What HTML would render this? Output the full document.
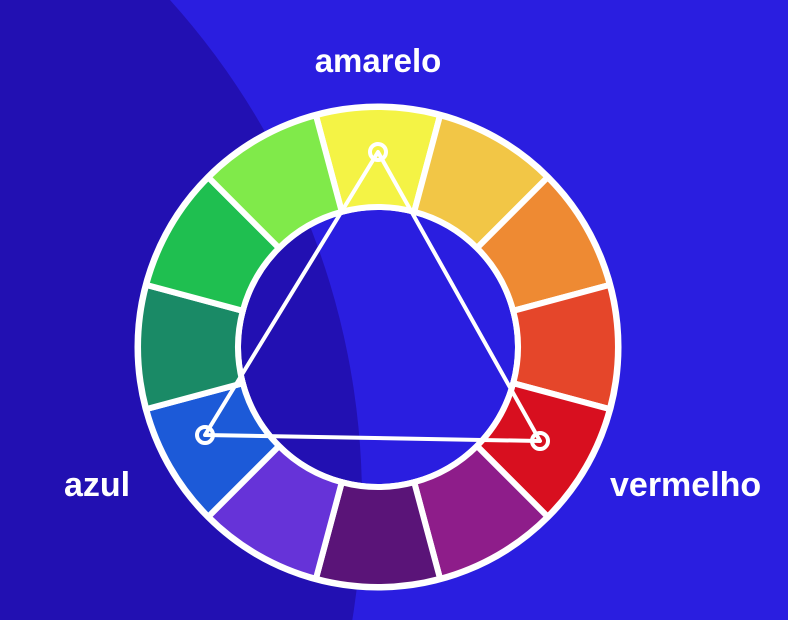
<!DOCTYPE html>
<html><head><meta charset="utf-8"><style>
html,body{margin:0;padding:0;width:788px;height:620px;overflow:hidden;background:#2a1ee0}
svg{display:block;position:absolute;left:0;top:0}
text{font-family:"Liberation Sans",sans-serif;font-weight:bold;fill:#fff}
</style></head><body>
<svg id="s" width="788" height="620" viewBox="0 0 788 620">
<rect width="788" height="620" fill="#2a1ee0"/>
<circle cx="-385" cy="500" r="747" fill="#2210b2"/>
<g id="w"></g>
<g fill="none" stroke="#fff" stroke-width="4" stroke-linejoin="round">
<polygon points="378,152 540,441 205,435"/>
</g>
<g fill="#fff" stroke="#fff" stroke-width="4">
<circle cx="378" cy="152" r="8" fill="none"/>
<circle cx="540" cy="441" r="8" fill="none"/>
<circle cx="205" cy="435" r="8" fill="none"/>
</g>
<text x="378" y="72" font-size="33" text-anchor="middle">amarelo</text>
<text x="64" y="496" font-size="34">azul</text>
<text x="610" y="496" font-size="34">vermelho</text>
</svg>
<script>
var cols=["#f4f345","#f2c646","#ee8a33","#e5462a","#d80f1f","#8e1d8a","#5a1478","#6633d8","#1c5ad8","#1a8a66","#1fbf50","#80ea4a"];
var cx=378,cy=347,R=240,r=140,g=document.getElementById('w'),h='';
function p(a,rad){var t=(a-90)*Math.PI/180;return (cx+rad*Math.cos(t)).toFixed(1)+','+(cy+rad*Math.sin(t)).toFixed(1);}
for(var i=0;i<12;i++){var a0=i*30-15,a1=i*30+15;
h+='<path d="M'+p(a0,R)+' A'+R+','+R+' 0 0 1 '+p(a1,R)+' L'+p(a1,r)+' A'+r+','+r+' 0 0 0 '+p(a0,r)+' Z" fill="'+cols[i]+'" stroke="#fff" stroke-width="6" stroke-linejoin="miter"/>';}
h+='<circle cx="'+cx+'" cy="'+cy+'" r="'+(R+1)+'" fill="none" stroke="#fff" stroke-width="5"/>';
h+='<circle cx="'+cx+'" cy="'+cy+'" r="'+(r-1)+'" fill="none" stroke="#fff" stroke-width="4"/>';
g.innerHTML=h;
</script>
</body></html>
